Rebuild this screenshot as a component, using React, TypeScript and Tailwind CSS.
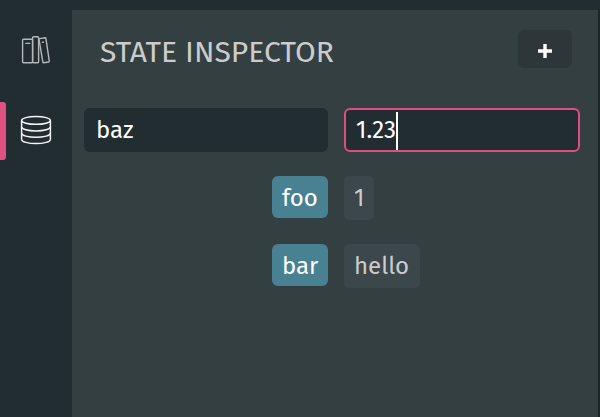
import React from "react";

function BooksIcon() {
  return (
    <svg width="30" height="30" viewBox="0 0 30 30" fill="none" stroke="#b4b8b9" strokeWidth="1.4" strokeLinejoin="round">
      <rect x="1.6" y="4.3" width="10" height="23.5" rx="1" />
      <rect x="11.6" y="1.7" width="6" height="26.1" rx="1" />
      <path d="M18.6 3.6 24.2 2.7Q24.8 2.6 24.9 3.4L28.3 26.2Q28.4 26.9 27.7 27L22.8 27.8Q22 27.9 21.9 27.1L18 4.4Q17.9 3.7 18.6 3.6Z" />
      <path d="M4.3 8.4H9.3M20.8 7.4 23 7.1" />
    </svg>
  );
}

function DatabaseIcon() {
  return (
    <svg width="32" height="30" viewBox="0 0 32 30" fill="none" stroke="#f4f6f6" strokeWidth="1.5">
      <ellipse cx="16" cy="5.4" rx="14.4" ry="3.9" />
      <path d="M1.6 5.4V24.4C1.6 26.7 8 28.6 16 28.6S30.4 26.7 30.4 24.4V5.4" />
      <path d="M1.6 11.8C1.6 14.1 8 15.9 16 15.9S30.4 14.1 30.4 11.8M1.6 18.2C1.6 20.5 8 22.3 16 22.3S30.4 20.5 30.4 18.2" />
    </svg>
  );
}

function Sidebar() {
  return (
    <nav className="flex w-[72px] shrink-0 flex-col pt-[25px]">
      <div className="flex h-[57px] items-start pt-[10px] pl-[21px]">
        <BooksIcon />
      </div>
      <div className="mt-5 flex h-[58px] items-center">
        <span className="h-[58px] w-[6px] rounded-r-[3px] bg-[#e05080]" />
        <span className="ml-[14px] pb-[2px]">
          <DatabaseIcon />
        </span>
      </div>
    </nav>
  );
}

function Entry({ name, value, valueClass }: { name: string; value: string; valueClass: string }) {
  return (
    <div className="flex h-11 gap-4">
      <div className="flex w-[244px] justify-end">
        <span className="flex h-[42px] w-14 items-center rounded-[6px] bg-[#488192] pt-px pl-[10px] text-2xl leading-none text-white">
          {name}
        </span>
      </div>
      <span className={`flex items-center rounded-[6px] bg-[#3b474b] pb-px pl-[10px] text-2xl leading-none text-[#cccccc] ${valueClass}`}>
        {value}
      </span>
    </div>
  );
}

export default function App() {
  return (
    <div className="flex h-[417px] w-[600px] overflow-hidden bg-[#222d31] font-['Fira_Sans','Noto_Sans',sans-serif] leading-none antialiased">
      <Sidebar />
      <main className="mt-[10px] flex flex-1 flex-col border-r-2 border-[#1b2628] bg-[#343f41] pl-3">
        <header className="flex h-[98px] justify-between pt-5 pr-[26px] pl-4">
          <h1 className="pt-[7px] text-3xl leading-[30px] tracking-[0.03px] whitespace-nowrap text-[#cccccc]">STATE INSPECTOR</h1>
          <button className="flex h-[38px] w-[54px] items-center justify-center rounded-[6px] bg-[#2d3739]" aria-label="Add">
            <svg width="14" height="14" viewBox="0 0 14 14" className="mt-[3px]">
              <path d="M7 0V14M0 7H14" stroke="#fff" strokeWidth="3.4" />
            </svg>
          </button>
        </header>
        <div className="flex flex-col gap-6">
          <div className="flex h-11 gap-4">
            <div className="flex w-[244px] items-center rounded-[6px] bg-[#222d31] pb-px pl-3 text-2xl leading-none text-white">baz</div>
            <div className="flex w-[236px] items-center rounded-[6px] border-2 border-[#de4f80] bg-[#222d31] pl-[10px] text-2xl leading-none text-white">
              <span className="w-10 pb-px">1.23</span>
              <span className="mt-[2px] h-[38px] w-[2px] bg-white" />
            </div>
          </div>
          <Entry name="foo" value="1" valueClass="w-[30px]" />
          <Entry name="bar" value="hello" valueClass="w-[76px]" />
        </div>
      </main>
    </div>
  );
}
